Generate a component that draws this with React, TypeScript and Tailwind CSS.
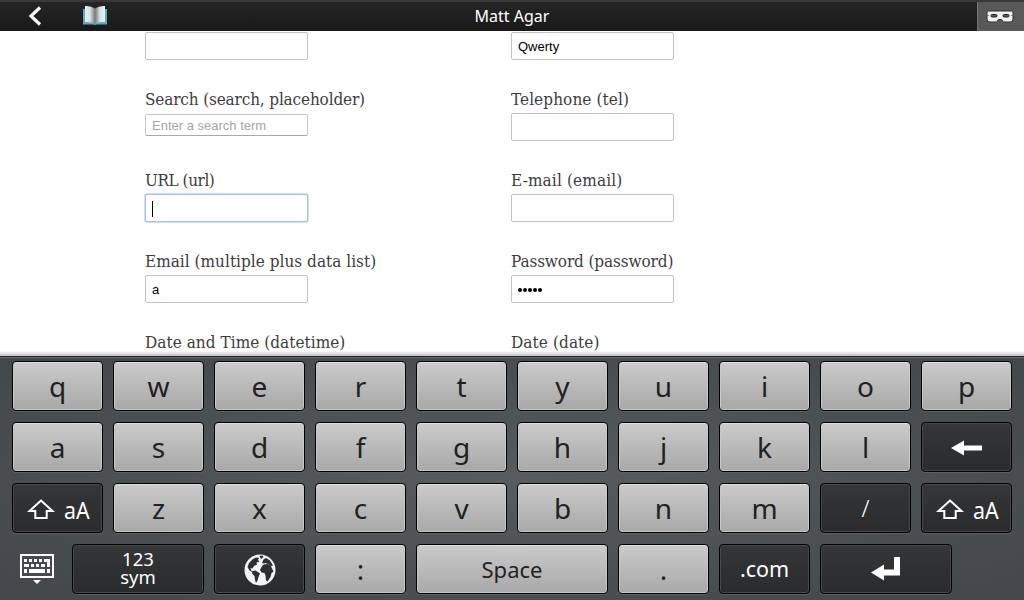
import type { ReactNode } from 'react';

const label = "block h-[22px] whitespace-nowrap font-['DejaVu_Serif_Condensed','DejaVu_Serif',serif] [font-stretch:condensed] text-[17px] leading-[22px] text-[#3d3d3d]";

function Field({ title, tracking = '', kind = 'normal', children }: { title: string; tracking?: string; kind?: 'normal' | 'search' | 'focus'; children?: ReactNode }) {
  const box =
    kind === 'search'
      ? 'mt-[4px] h-[22px] border border-[#c6c6c6] border-b-[#a9a9a9] text-[#a5a5a5]'
      : kind === 'focus'
        ? 'mt-[3px] h-7 border border-[#a5bfe6] shadow-[0_0_1px_1px_#ccdcf2] text-black'
        : 'mt-[3px] h-7 border border-[#c3c3c3] text-black';
  return (
    <div className="h-[81px] w-[366px]">
      <div className={label + ' ' + tracking}>{title}</div>
      <div className={"flex w-[163px] items-center rounded-[2px] bg-white px-1.5 pt-px font-['Liberation_Sans',sans-serif] text-[13px] " + box}>{children}</div>
    </div>
  );
}

function Key({ dark = false, w = 'w-[91px]', children }: { dark?: boolean; w?: string; children: ReactNode }) {
  const tone = dark
    ? 'bg-linear-to-b from-[#343638] to-[#292b2d] text-white shadow-[inset_0_0_0_1px_#46494b,0_1px_0_#5b5f61]'
    : 'bg-linear-to-b from-[#cbcbcb] to-[#a8a8a8] text-[#222] shadow-[inset_0_1px_0_#dedede,inset_1px_0_0_#c8c8c8,inset_-1px_0_0_#c8c8c8,inset_0_-1px_0_#c2c5c0,0_1px_0_#5b5f61]';
  return (
    <button className={'flex h-[50px] shrink-0 items-center justify-center rounded-[4px] border border-black ' + w + ' ' + tone}>
      {children}
    </button>
  );
}

function Letter({ c }: { c: string }) {
  return (
    <Key>
      <span className="text-[28px] leading-none">{c}</span>
    </Key>
  );
}

function ShiftKey() {
  return (
    <Key dark>
      <svg width="28" height="21" viewBox="0 0 28 21" fill="none" stroke="white" strokeWidth="2" className="relative top-px left-px mr-[9px] shrink-0">
        <path d="M14 1.6 25.500 12H19.700V19H8.300V12H2.500Z" />
      </svg>
      <span className="relative top-[2px] left-px w-[26px] origin-left scale-x-[0.93] text-[23px] leading-none">aA</span>
    </Key>
  );
}

export default function App() {
  return (
    <div className="flex h-[600px] w-[1024px] flex-col overflow-hidden bg-white font-['Noto_Sans','Open_Sans',sans-serif]">
      <header className="grid h-[31px] shrink-0 grid-cols-[1fr_auto_1fr] items-center border-t-2 border-[#393939] bg-linear-to-b from-[#252525] to-[#191919] text-white">
        <div className="flex items-center pl-[28px]">
          <svg width="14" height="20" viewBox="0 0 14 20" fill="none" stroke="#f5f5f5" strokeWidth="3.2" className="relative -top-px">
            <path d="M12 1.500 3 10l9 8.500" />
          </svg>
          <svg width="26" height="22" viewBox="0 0 26 22" className="relative -top-[2px] ml-[40px]">
            <defs>
              <linearGradient id="pageLeft">
                <stop offset="0" stopColor="#e3f4f5" />
                <stop offset=".5" stopColor="#d9e2e2" />
                <stop offset="1" stopColor="#777b7b" />
              </linearGradient>
              <linearGradient id="pageRight">
                <stop offset="0" stopColor="#777b7b" />
                <stop offset=".5" stopColor="#d9e2e2" />
                <stop offset="1" stopColor="#e3f4f5" />
              </linearGradient>
            </defs>
            <path d="M1 5h24v15.500H15l-2 .5-2-.5H1z" fill="#5eaabd" />
            <path d="M3 2q6-.5 10 2.500v15q-4-2-10-1.500z" fill="url(#pageLeft)" />
            <path d="M23 2q-6-.5-10 2.500v15q4-2 10-1.500z" fill="url(#pageRight)" />
          </svg>
        </div>
        <h1 className="relative -top-px text-[16px] leading-none">Matt Agar</h1>
        <div className="flex h-[29px] w-[47px] items-center justify-center justify-self-end border-l border-[#777] bg-[#595959]">
          <svg width="28" height="14" viewBox="0 0 28 14" className="relative -left-px">
            <path d="M2.500 1h23Q27 1 27 3v1.500l-1 1 1 1V9q0 3-3 3h-6.500L15.500 9.500h-3L10.500 12H4Q1 12 1 9V6.500l1-1-1-1V3Q1 1 2.500 1z" fill="#f0f0f0" stroke="#333" />
            <rect x="5" y="4.500" width="6" height="2.500" rx="1.200" fill="#595959" stroke="#222" />
            <rect x="17" y="4.500" width="6" height="2.500" rx="1.200" fill="#595959" stroke="#222" />
          </svg>
        </div>
      </header>

      <main className="h-[320px] shrink-0 overflow-hidden pl-[145px]">
        <div className="-mt-[24px] flex w-[732px] flex-wrap">
          <Field title="" />
          <Field title="">Qwerty</Field>
          <Field title="Search (search, placeholder)" tracking="tracking-[-0.15px]" kind="search">
            <span>Enter a search term</span>
          </Field>
          <Field title="Telephone (tel)" tracking="tracking-[0.1px]" />
          <Field title="URL (url)" tracking="tracking-[-0.45px]" kind="focus">
            <span className="h-4 w-px bg-black" />
          </Field>
          <Field title="E-mail (email)" tracking="tracking-[0.15px]" />
          <Field title="Email (multiple plus data list)" tracking="tracking-[0.03px]">a</Field>
          <Field title="Password (password)" tracking="tracking-[-0.12px]">
            <span className="flex gap-px">
              {[0, 1, 2, 3, 4].map((i) => (
                <span key={i} className="size-1 rounded-full bg-black" />
              ))}
            </span>
          </Field>
          <Field title="Date and Time (datetime)" tracking="tracking-[0.05px]" />
          <Field title="Date (date)" tracking="tracking-[0.1px]" />
        </div>
      </main>

      <div className="h-[5px] shrink-0 bg-linear-to-b from-white to-[#c0c0c0]" />
      <section className="flex h-[244px] shrink-0 flex-col gap-[11px] border-t border-[#202426] bg-[radial-gradient(ellipse_at_center,#575c5f_0%,#4b5053_55%,#42474a_100%)] pt-[4px] pl-[12px] shadow-[inset_0_1px_0_#666b6e]">
        <div className="flex gap-[10px]">
          {'qwertyuiop'.split('').map((c) => <Letter key={c} c={c} />)}
        </div>
        <div className="flex gap-[10px]">
          {'asdfghjkl'.split('').map((c) => <Letter key={c} c={c} />)}
          <Key dark>
            <svg width="32" height="16" viewBox="0 0 32 16" fill="white" className="relative top-px">
              <path d="M0 8 13 .5V5.500H31v5H13v5z" />
            </svg>
          </Key>
        </div>
        <div className="flex gap-[10px]">
          <ShiftKey />
          {'zxcvbnm'.split('').map((c) => <Letter key={c} c={c} />)}
          <Key dark>
            <span className="text-[23px] leading-none font-light">/</span>
          </Key>
          <ShiftKey />
        </div>
        <div className="flex gap-[10px]">
          <div className="flex w-[50px] items-center pl-[8px]">
            <svg width="34" height="30" viewBox="0 0 34 30" fill="white" shapeRendering="crispEdges">
              <path d="M0 0h34v24H0zM2 2v20h30V2z" fillRule="evenodd" />
              <path d="M4 5h3v3H4zM9 5h3v3H9zM14 5h3v3h-3zM19 5h3v3h-3zM24 5h6v8h-3V8h-3zM4 10h5v3H4zM11 10h3v3h-3zM16 10h3v3h-3zM21 10h4v3h-4zM4 15h3v4H4zM9 15h16v4H9zM27 15h3v4h-3z" />
              <path d="M13 26h8l-4 4z" shapeRendering="auto" />
            </svg>
          </div>
          <Key dark w="w-[132px]">
            <span className="relative -top-px flex flex-col items-center text-[18.500px] leading-[18px]">
              <span>123</span>
              <span>sym</span>
            </span>
          </Key>
          <Key dark>
            <svg width="32" height="32" viewBox="0 0 32 32" className="relative top-px">
              <circle cx="16" cy="16" r="15.500" fill="#f2f3f4" />
              <g fill="#2d2f31">
                <path d="M3.500 13 5 9l4-4 3-1.500 3 .5-1 2 1.500 1.500-3 1 .5 2-3 1.500-1.500 2.500-2-.5 1 3 2.500 1-1 .5-3.500-2z" />
                <path d="m8.500 17 3-.5 4.500 3-1.500 3.500-1 3.500-1.500 2.500-1-3-.5-4-2.500-2.500z" />
                <path d="m17.500 13 2-2.500 3.500-.5 3.500 1 2 4.500 1 2-2 1.500-1 4-3 4.500-1.500-1-.5-5-1-2.500-3-.5-1.500-2.500z" />
                <path d="m18 9 1.500-3.500L22 4l4 2.500 3 5-2 .5-3-2-2.500-1-1.500.5z" />
                <path d="m15.500 2 3-.5 1 1.500-2.500 2z" />
              </g>
            </svg>
          </Key>
          <Letter c=":" />
          <Key w="w-[192px]">
            <span className="text-[22px] leading-none">Space</span>
          </Key>
          <Letter c="." />
          <Key dark>
            <span className="text-[21.500px] leading-none">.com</span>
          </Key>
          <Key dark w="w-[132px]">
            <svg width="30" height="24" viewBox="0 0 30 24" fill="white">
              <path d="M0 15.500 13 7.500V12.500H23V0h6v18.500H13v5z" />
            </svg>
          </Key>
        </div>
      </section>
    </div>
  );
}
